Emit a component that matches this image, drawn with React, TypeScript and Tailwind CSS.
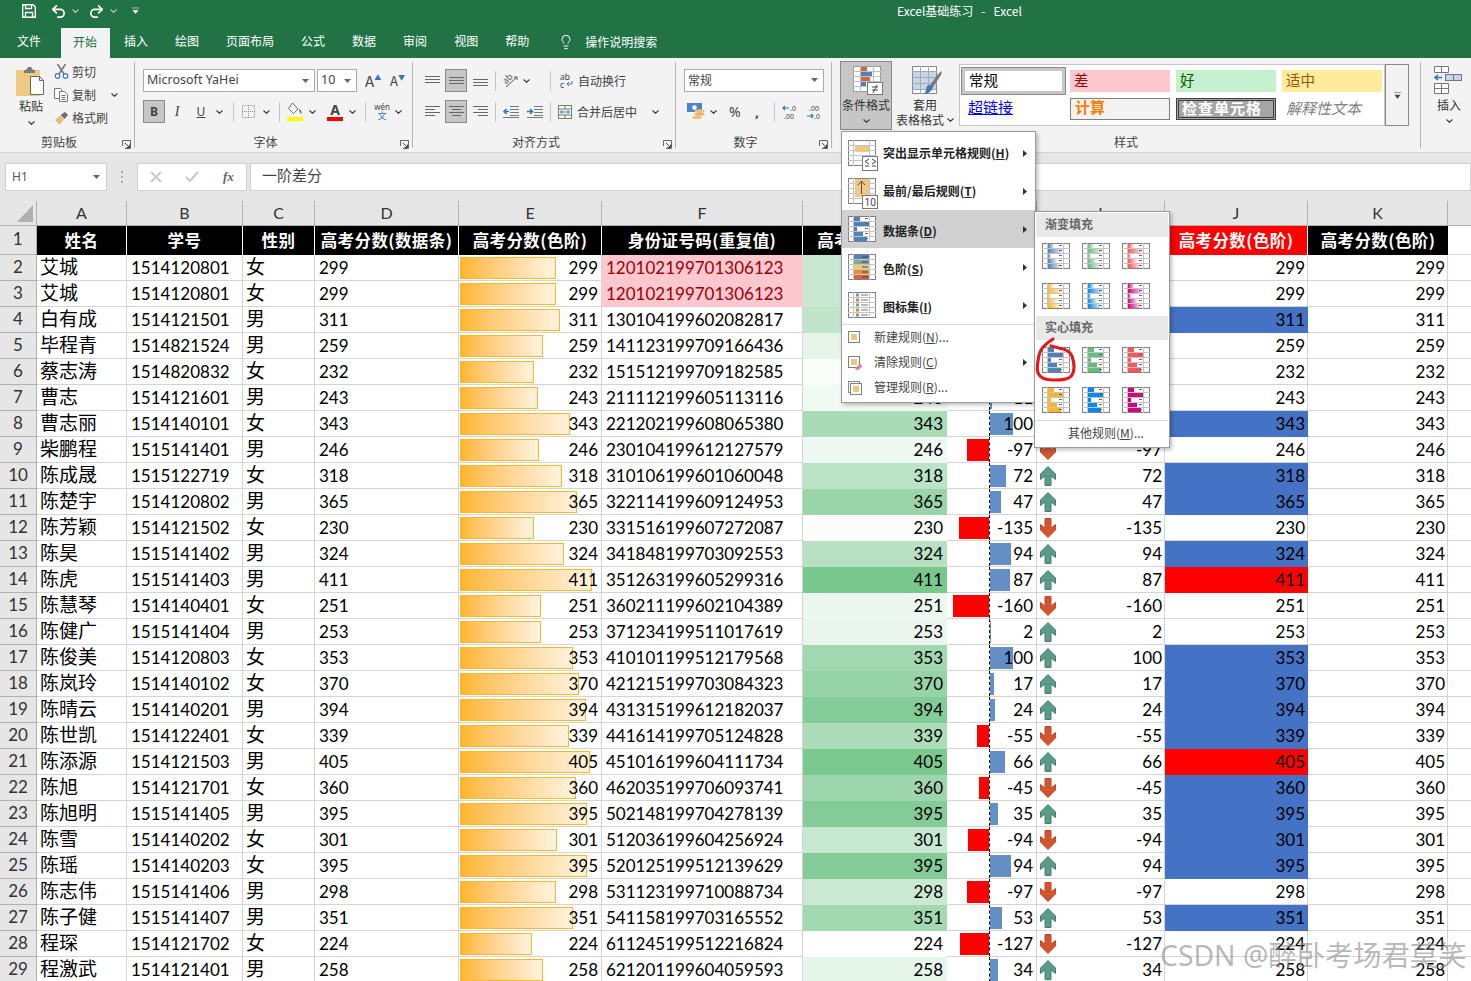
import React from "react"
import { Lightbulb, Redo2, Undo2 } from "lucide-react"

const rows: [string, string, string, number, string][] = [
  ["艾城", "1514120801", "女", 299, "120102199701306123"],
  ["艾城", "1514120801", "女", 299, "120102199701306123"],
  ["白有成", "1514121501", "男", 311, "130104199602082817"],
  ["毕程青", "1514821524", "男", 259, "141123199709166436"],
  ["蔡志涛", "1514820832", "女", 232, "151512199709182585"],
  ["曹志", "1514121601", "男", 243, "211112199605113116"],
  ["曹志丽", "1514140101", "女", 343, "221202199608065380"],
  ["柴鹏程", "1515141401", "男", 246, "230104199612127579"],
  ["陈成晟", "1515122719", "女", 318, "310106199601060048"],
  ["陈楚宇", "1514120802", "男", 365, "322114199609124953"],
  ["陈芳颖", "1514121502", "女", 230, "331516199607272087"],
  ["陈昊", "1515141402", "男", 324, "341848199703092553"],
  ["陈虎", "1515141403", "男", 411, "351263199605299316"],
  ["陈慧琴", "1514140401", "女", 251, "360211199602104389"],
  ["陈健广", "1515141404", "男", 253, "371234199511017619"],
  ["陈俊美", "1514120803", "女", 353, "410101199512179568"],
  ["陈岚玲", "1514140102", "女", 370, "421215199703084323"],
  ["陈晴云", "1514140201", "男", 394, "431315199612182037"],
  ["陈世凯", "1514122401", "女", 339, "441614199705124828"],
  ["陈添源", "1514121503", "男", 405, "451016199604111734"],
  ["陈旭", "1514121701", "女", 360, "462035199706093741"],
  ["陈旭明", "1515141405", "男", 395, "502148199704278139"],
  ["陈雪", "1514140202", "女", 301, "512036199604256924"],
  ["陈瑶", "1514140203", "女", 395, "520125199512139629"],
  ["陈志伟", "1515141406", "男", 298, "531123199710088734"],
  ["陈子健", "1515141407", "男", 351, "541158199703165552"],
  ["程琛", "1514121702", "女", 224, "611245199512216824"],
  ["程激武", "1514121401", "男", 258, "621201199604059593"],
]

const gridCols = "grid grid-cols-[37px_90px_116px_72px_144px_143px_201px_144px_90px_128px_143px_140px_23px]"
const cell = "border-r border-b border-[#d4d4d4] flex items-center overflow-visible whitespace-nowrap"
const numFont = "font-['Lato','Noto_Sans_CJK_SC',sans-serif] text-[17px]"

const greenScale = (v: number) => {
  const t = (v - 224) / 216
  return `rgb(${255 - 156 * t},${255 - 65 * t},${255 - 132 * t})`
}

const Chev = ({ className = "" }: { className?: string }) => (
  <svg width="7" height="4" viewBox="0 0 7 4" className={className}>
    <path d="M.5.5 3.5 3.3 6.5.5" fill="none" stroke="#444" strokeWidth="1.2" />
  </svg>
)

const Caret = () => (
  <svg width="7" height="4" viewBox="0 0 7 4"><path d="M0 0h7L3.5 4z" fill="#666" /></svg>
)

const Sep = () => <div className="w-px h-[20px] bg-[#c6c6c6]" />
const GroupSep = () => <div className="w-px h-[86px] mt-[2px] bg-[#b4b4b4]" />

const Launcher = () => (
  <svg width="9" height="9" viewBox="0 0 9 9" className="absolute right-[3px] top-[6px]">
    <path d="M.5 6V.5H8.5V8.5H3" fill="none" stroke="#666" />
    <path d="M3 3 7.5 7.5M7.5 4.5v3h-3" fill="none" stroke="#444" />
  </svg>
)

const Group = ({ className, label, launcher = true, children }: { className: string; label: string; launcher?: boolean; children: React.ReactNode }) => (
  <div className={`flex flex-col h-[90px] ${className}`}>
    <div className="h-[74px]">{children}</div>
    <div className={`relative h-[16px] text-center text-[12px] leading-[16px] text-[#444] ${launcher ? "pr-[16px]" : ""}`}>
      {label}
      {launcher && <Launcher />}
    </div>
  </div>
)

const Lines = ({ kind }: { kind: "top" | "mid" | "bot" | "left" | "center" | "right" }) => {
  const horizontal = kind === "top" || kind === "mid" || kind === "bot"
  const ys = kind === "top" ? [2, 5, 8] : kind === "mid" ? [3, 6, 9] : kind === "bot" ? [5, 8, 11] : [1, 4, 7, 10]
  return (
    <svg width="15" height="13" viewBox="0 0 15 13">
      {ys.map((y, i) => {
        const short = !horizontal && i % 2 === 1
        const x1 = kind === "right" && short ? 5 : kind === "center" && short ? 3 : 0
        const x2 = kind === "left" && short ? 10 : kind === "center" && short ? 12 : 15
        return <line key={y} x1={x1} x2={x2} y1={y + 0.5} y2={y + 0.5} stroke="#666" />
      })}
    </svg>
  )
}

const Selected = ({ children }: { children: React.ReactNode }) => (
  <div className="w-[22px] h-[23px] bg-[#c6c6c6] border border-[#8a8a8a] flex items-center justify-center">{children}</div>
)

const PasteIcon = () => (
  <svg width="30" height="31" viewBox="0 0 30 31">
    <rect x="0" y="4" width="24" height="26" rx="1" fill="#efc884" />
    <path d="M8 4h2l2-3h3l2 3h2v3H8z" fill="#7b7b7b" />
    <path d="M14.500 10.500h9l4 4v14h-13z" fill="#fff" stroke="#666" />
    <path d="M23.500 10.500v4h4" fill="none" stroke="#666" />
  </svg>
)

const ScissorsIcon = () => (
  <svg width="15" height="15" viewBox="0 0 15 15">
    <path d="M3.500 0 10 10M11.500 0 5 10" stroke="#7a7a7a" strokeWidth="1.600" fill="none" />
    <circle cx="3.500" cy="12" r="2.300" fill="none" stroke="#3f78b5" strokeWidth="1.200" />
    <circle cx="11.500" cy="12" r="2.300" fill="none" stroke="#3f78b5" strokeWidth="1.200" />
  </svg>
)

const CopyIcon = () => (
  <svg width="15" height="14" viewBox="0 0 15 14">
    <path d="M.5.500h6l1 1v9H.5z" fill="#fff" stroke="#777" />
    <path d="M5.500 3.500h5l3 3v7h-8z" fill="#fff" stroke="#777" />
    <path d="M7.500 7.500h4M7.500 9.500h4M7.500 11.500h4" stroke="#3f78b5" />
  </svg>
)

const BrushIcon = () => (
  <svg width="15" height="14" viewBox="0 0 15 14">
    <path d="M1 9 6 4.500 10 8.500 5.500 13.500C4 12 2 10.500 1 9z" fill="#e8bd7c" />
    <path d="M6.500 4 10.500 8 14 4 11 1z" fill="#6c6c6c" />
  </svg>
)

const BorderIcon = () => (
  <svg width="13" height="13" viewBox="0 0 13 13">
    <rect x=".5" y=".5" width="12" height="12" fill="none" stroke="#888" strokeDasharray="1 1" />
    <path d="M6.500 0v13M0 6.500h13" stroke="#888" strokeDasharray="1 1" />
  </svg>
)

const FillIcon = () => (
  <svg width="16" height="19" viewBox="0 0 16 19">
    <path d="M5.500 1 11 7 6.500 11.500 1.500 6.500z" fill="#fff" stroke="#666" />
    <path d="M12 7c2 1 3 3 2.500 4.500-1.500 0-2.500-2-2.500-4.500z" fill="#3f78b5" />
    <rect y="15" width="16" height="4" fill="#ffff00" />
  </svg>
)

const OrientIcon = () => (
  <svg width="16" height="16" viewBox="0 0 16 16">
    <text x="1" y="9" fontSize="9" fill="#555" transform="rotate(-45 5 8)" fontFamily="Noto Sans">ab</text>
    <path d="M3 14 14 4M14 4h-3M14 4v3" fill="none" stroke="#555" />
  </svg>
)

const WrapIcon = () => (
  <svg width="13" height="15" viewBox="0 0 13 15">
    <text x="0" y="7" fontSize="8.500" fill="#444" fontFamily="Noto Sans">ab</text>
    <text x="0" y="14.500" fontSize="8.500" fill="#444" fontFamily="Noto Sans">c</text>
    <path d="M12 8v3H7M7 11l2-2M7 11l2 2" fill="none" stroke="#3f78b5" />
  </svg>
)

const IndentIcon = ({ flip = false }: { flip?: boolean }) => (
  <svg width="16" height="12" viewBox="0 0 16 12">
    <path d="M7 .5h9M7 3.500h9M7 6.500h9M7 9.500h9M0 11.500h16" stroke="#777" fill="none" />
    {flip ? <path d="M0 5.500h5M3 3l2.500 2.500L3 8" stroke="#2f75c0" strokeWidth="1.500" fill="none" /> : <path d="M6 5.500H1M3.500 3 1 5.500 3.500 8" stroke="#2f75c0" strokeWidth="1.500" fill="none" />}
  </svg>
)

const MergeIcon = () => (
  <svg width="14" height="14" viewBox="0 0 14 14">
    <rect x=".5" y=".5" width="13" height="13" fill="#fff" stroke="#777" />
    <path d="M0 4h14M0 10h14M7 0v4M7 10v4" stroke="#777" />
    <path d="M2.500 7h9M4.500 5 2.500 7l2 2M9.500 5l2 2-2 2" fill="none" stroke="#2f75c0" />
  </svg>
)

const MoneyIcon = () => (
  <svg width="18" height="17" viewBox="0 0 18 17">
    <rect x="0" y="0" width="15" height="9" fill="#4a86c5" />
    <circle cx="7.500" cy="4.500" r="2.300" fill="#fff" />
    <ellipse cx="12.500" cy="8" rx="5" ry="1.800" fill="#f0c27a" />
    <ellipse cx="12.500" cy="11" rx="5" ry="1.800" fill="#eeb45f" />
    <ellipse cx="10" cy="14.500" rx="5" ry="1.800" fill="#f0c27a" />
  </svg>
)

const DecimalIcon = ({ more }: { more: boolean }) => (
  <svg width="16" height="14" viewBox="0 0 16 14">
    {more ? (
      <>
        <path d="M7 3H1M3 1 1 3l2 2" stroke="#2f75c0" strokeWidth="1.200" fill="none" />
        <text x="8" y="6" fontSize="7" fill="#444" fontFamily="Noto Sans">.0</text>
        <text x="2" y="13.500" fontSize="7" fill="#444" fontFamily="Noto Sans">.00</text>
      </>
    ) : (
      <>
        <text x="3" y="6" fontSize="7" fill="#444" fontFamily="Noto Sans">.00</text>
        <path d="M1 11h6M5 9l2 2-2 2" stroke="#2f75c0" strokeWidth="1.200" fill="none" />
        <text x="8" y="13.500" fontSize="7" fill="#444" fontFamily="Noto Sans">.0</text>
      </>
    )}
  </svg>
)

const CondFormatIcon = () => (
  <svg width="30" height="30" viewBox="0 0 30 30">
    <rect x=".5" y=".5" width="27" height="25" fill="#fff" stroke="#9a9a9a" />
    <path d="M0 5.500h28M0 10.500h28M0 15.500h28M0 20.500h28M7.500 0v26M20.500 0v26" stroke="#c0c0c0" />
    <rect x="8" y="1" width="6" height="4" fill="#dc6140" />
    <rect x="8" y="6" width="11" height="4" fill="#4f81bd" />
    <rect x="8" y="11" width="9" height="4" fill="#dc6140" />
    <rect x="8" y="16" width="5" height="4" fill="#4f81bd" />
    <rect x="14.500" y="16.500" width="15" height="12" fill="#fff" stroke="#777" />
    <path d="M19 21h6M19 24h6M24 19l-4 8" stroke="#444" fill="none" />
  </svg>
)

const TableStyleIcon = () => (
  <svg width="30" height="30" viewBox="0 0 30 30">
    <rect x=".5" y=".5" width="24" height="27" fill="#fff" stroke="#8a8a8a" />
    <rect x="1" y="6" width="23" height="17" fill="#c5d6ea" />
    <path d="M0 5.500h25M0 11.500h25M0 17.500h25M0 23.500h25M8.500 0v28M16.500 0v28" stroke="#a8a8a8" />
    <path d="M18 19 27 7l3-2-1 4-8 12z" fill="#7a7a7a" />
    <path d="M15 20c3-2 5-1 6 1-1 4-5 7-9 7 2-2 2-5 3-8z" fill="#3f78b5" />
  </svg>
)

const InsertIcon = () => (
  <svg width="28" height="28" viewBox="0 0 28 28">
    <path d="M.5.500h14v6H.5zM7.500.500v6M.5 17.500h14v10H.5zM7.500 17.500v10M.5 22.500h14" fill="#fff" stroke="#777" />
    <rect x="11.500" y="8.500" width="16" height="6" fill="#c5d6ea" stroke="#777" />
    <path d="M19.500 8.500v6" stroke="#777" />
    <path d="M8 11.500H1M4 9 1 11.500 4 14" fill="none" stroke="#2f75c0" strokeWidth="1.600" />
  </svg>
)

const GridFrame = () => (
  <>
    <rect x=".5" y=".5" width="27" height="25" fill="#fff" stroke="#808080" />
    {[5.5, 10.5, 15.5, 20.5].map((y) => <line key={y} x1="0" x2="28" y1={y} y2={y} stroke="#c4c4c4" />)}
    <line x1="5.500" x2="5.500" y1="0" y2="26" stroke="#c4c4c4" />
    <line x1="21.500" x2="21.500" y1="0" y2="26" stroke="#c4c4c4" />
  </>
)

const DataBarIcon = ({ color, gradient = false }: { color: string; gradient?: boolean }) => {
  const id = `bar-${color.slice(1)}`
  const bars = [6, 15, 3, 9, 13]
  return (
    <svg width="28" height="26" viewBox="0 0 28 26">
      <defs>
        <linearGradient id={id}>
          <stop offset="0" stopColor={color} />
          <stop offset="1" stopColor={color} stopOpacity=".1" />
        </linearGradient>
      </defs>
      <GridFrame />
      {bars.map((w, i) => <rect key={i} x="6" y={1 + i * 5} width={w} height="4" fill={gradient ? `url(#${id})` : color} />)}
      {bars.map((_, i) => <line key={i} x1="17" x2="20" y1={2.5 + i * 5} y2={2.5 + i * 5} stroke="#666" />)}
    </svg>
  )
}

const HighlightIcon = () => (
  <svg width="30" height="32" viewBox="0 0 30 32">
    <GridFrame />
    <rect x="7" y="6" width="14" height="6" fill="#efc884" />
    <rect x="14.500" y="16.500" width="15" height="14" fill="#fff" stroke="#777" />
    <path d="M21 19l-4 2.500 4 2.500M17 26h4M24 19l4 2.500-4 2.500M24 26h4" fill="none" stroke="#444" />
  </svg>
)

const TopBottomIcon = () => (
  <svg width="30" height="32" viewBox="0 0 30 32">
    <GridFrame />
    <rect x="7" y="1" width="14" height="18" fill="#efc884" />
    <path d="M13.500 16V3M10 7l3.500-4L17 7" fill="none" stroke="#555" />
    <rect x="14.500" y="17.500" width="15" height="13" fill="#fff" stroke="#777" />
    <text x="16.500" y="28" fontSize="10" fill="#444" fontFamily="Noto Sans">10</text>
  </svg>
)

const ColorScaleIcon = () => (
  <svg width="28" height="26" viewBox="0 0 28 26">
    <GridFrame />
    {["#4f81bd", "#7fa98f", "#efc884", "#e88f3c", "#dc6140"].map((c, i) => (
      <g key={c}>
        <rect x="6" y={1 + i * 5} width="15" height="4" fill={c} />
        <line x1="14" x2="20" y1={3 + i * 5} y2={3 + i * 5} stroke="#444" />
      </g>
    ))}
  </svg>
)

const IconSetIcon = () => (
  <svg width="28" height="26" viewBox="0 0 28 26">
    <GridFrame />
    {["#6aa88d", "#e07a3a", "#6aa88d", "#e07a3a", "#6aa88d"].map((c, i) => (
      <g key={i}>
        <rect x="8" y={1.500 + i * 5} width="3" height="3" fill={c} />
        <line x1="13" x2="20" y1={3 + i * 5} y2={3 + i * 5} stroke="#777" />
      </g>
    ))}
  </svg>
)

const SmallRuleIcon = ({ kind }: { kind: "new" | "clear" | "manage" }) => (
  <svg width="14" height="14" viewBox="0 0 14 14">
    {kind === "manage" && <rect x=".5" y=".5" width="11" height="11" fill="none" stroke="#888" />}
    <rect x={kind === "manage" ? 2.500 : 0.500} y={kind === "manage" ? 2.500 : 0.500} width="11" height="11" fill="#fff" stroke="#808080" />
    <rect x={kind === "manage" ? 5 : 3} y={kind === "manage" ? 5 : 3} width="6" height="6" fill="#efc884" />
    {kind === "clear" && <path d="M7 13 12 7.500 14.500 10 10 14.500z" fill="#ec7f9a" />}
  </svg>
)

const MenuArrow = () => (
  <svg width="4" height="7" viewBox="0 0 4 7" className="ml-auto mr-[8px]"><path d="M0 0l4 3.500L0 7z" fill="#333" /></svg>
)

const ArrowUp = () => (
  <svg width="16" height="20" viewBox="0 0 16 20">
    <path d="M8 .5 15.500 8V13.500L11 10V19.500H5V10L.5 13.500V8Z" fill="#5b9b87" stroke="#437f6c" />
  </svg>
)

const ArrowDown = () => (
  <svg width="16" height="20" viewBox="0 0 16 20">
    <path d="M8 19.500 15.500 12V6.500L11 10V.5H5V10L.5 6.500V12Z" fill="#d2552f" stroke="#bc4a2b" />
  </svg>
)

const Toolbar = () => (
  <div className="flex items-start h-[28px] bg-[#217346] pl-[22px] pt-[3px] text-white">
    <svg width="14" height="14" viewBox="0 0 14 14" className="mt-px">
      <path d="M.7.700H11L13.300 3V13.300H.7Z" fill="none" stroke="#fff" strokeWidth="1.400" />
      <path d="M3.500 1v3.500h6V1M3.500 13V8.500h7V13" fill="none" stroke="#fff" strokeWidth="1.300" />
    </svg>
    <Undo2 size={17} strokeWidth={2.4} className="ml-[14px]" />
    <Chev className="ml-[5px] mt-[6px] invert" />
    <Redo2 size={17} strokeWidth={2.4} className="ml-[9px]" />
    <Chev className="ml-[5px] mt-[6px] invert" />
    <svg width="7" height="7" viewBox="0 0 7 7" className="ml-[15px] mt-[4px]"><path d="M0 1h7M1 3.500h5L3.500 6.500z" fill="#fff" stroke="#fff" strokeWidth=".6" /></svg>
    <span className="ml-[758px] text-[12px] leading-[16px] whitespace-pre">Excel基础练习   -   Excel</span>
  </div>
)

const Tabs = () => (
  <div className="flex h-[30px] bg-[#217346] text-[12px] text-white leading-[26px] gap-[3px] pl-[5px]">
    <span className="px-3 mr-[5px]">文件</span>
    <span className="pl-3 pr-[13px] bg-[#f3f3f3] text-[#217346] leading-[27px]">开始</span>
    <span className="px-3 -ml-px">插入</span>
    <span className="px-3">绘图</span>
    <span className="px-3">页面布局</span>
    <span className="px-3">公式</span>
    <span className="px-3">数据</span>
    <span className="px-3">审阅</span>
    <span className="px-3">视图</span>
    <span className="px-3">帮助</span>
    <div className="flex items-center pl-[14px] pb-[2px]">
      <Lightbulb size={16} strokeWidth={1.500} />
      <span className="ml-[11px]">操作说明搜索</span>
    </div>
  </div>
)

const Ribbon = () => (
  <div className="flex items-start h-[95px] pt-[2px] bg-[#f3f3f3] border-b border-[#d4d4d4] text-[#444] text-[12px]">
    <Group className="w-[134px]" label="剪贴板">
      <div className="flex pl-[16px]">
        <div className="flex flex-col items-center w-[30px] pt-[6px]">
          <PasteIcon />
          <span className="leading-[16px] mt-[1px] text-[#333]">粘贴</span>
          <Chev className="mt-[7px]" />
        </div>
        <div className="flex flex-col ml-[8px]">
          <div className="flex items-center h-[23px]"><ScissorsIcon /><span className="ml-[3px]">剪切</span></div>
          <div className="flex items-center h-[23px]"><CopyIcon /><span className="ml-[3px]">复制</span><Chev className="ml-[15px]" /></div>
          <div className="flex items-center h-[23px]"><BrushIcon /><span className="ml-[3px]">格式刷</span></div>
        </div>
      </div>
    </Group>
    <GroupSep />
    <Group className="w-[277px]" label="字体">
      <div className="flex flex-col pl-[8px] pt-[9px]">
        <div className="flex items-center h-[23px]">
          <div className="flex items-center justify-between w-[172px] h-[23px] bg-white border border-[#ababab] pl-[3px] pr-[5px] font-['Noto_Sans'] text-[12.500px]">
            Microsoft YaHei <Caret />
          </div>
          <div className="flex items-center justify-between w-[40px] h-[23px] ml-[2px] bg-white border border-[#ababab] pl-[3px] pr-[5px] font-['Noto_Sans'] text-[12.500px]">
            10 <Caret />
          </div>
          <div className="ml-[8px] flex items-start w-[16px] text-[15px] leading-[16px]">A<span className="text-[7px] text-[#2f75c0] leading-[8px]">▲</span></div>
          <div className="ml-[9px] flex items-start w-[14px] text-[13px] leading-[16px]">A<span className="text-[7px] text-[#2f75c0] leading-[8px]">▼</span></div>
        </div>
        <div className="flex items-center h-[23px] mt-[8px]">
          <Selected><span className="font-['Noto_Sans'] font-bold text-[12px]">B</span></Selected>
          <span className="ml-[5px] w-[14px] text-center font-['Liberation_Serif'] italic text-[14px]">I</span>
          <span className="ml-[10px] w-[14px] text-center underline font-['Noto_Sans'] text-[12px]">U</span>
          <Chev className="ml-[8px]" />
          <div className="ml-[10px]"><Sep /></div>
          <div className="ml-[8px]"><BorderIcon /></div>
          <Chev className="ml-[8px]" />
          <div className="ml-[9px]"><Sep /></div>
          <div className="ml-[7px]"><FillIcon /></div>
          <Chev className="ml-[6px]" />
          <div className="ml-[11px] flex flex-col items-center w-[16px] leading-none">
            <span className="text-[14px] font-['Noto_Sans'] font-bold leading-[14px]">A</span>
            <div className="w-[16px] h-[4px] bg-[#ff0000]" />
          </div>
          <Chev className="ml-[6px]" />
          <div className="ml-[9px]"><Sep /></div>
          <div className="ml-[8px] flex flex-col items-center w-[16px]">
            <span className="text-[8px] leading-[8px] font-['Noto_Sans']">wén</span>
            <span className="text-[9px] leading-[10px] text-[#2f75c0]">文</span>
          </div>
          <Chev className="ml-[5px]" />
        </div>
      </div>
    </Group>
    <GroupSep />
    <Group className="w-[262px]" label="对齐方式">
      <div className="flex flex-col pl-[12px] pt-[9px]">
        <div className="flex items-center h-[23px]">
          <Lines kind="top" />
          <div className="ml-[5px]"><Selected><Lines kind="mid" /></Selected></div>
          <div className="ml-[6px]"><Lines kind="bot" /></div>
          <div className="ml-[7px]"><Sep /></div>
          <div className="ml-[7px]"><OrientIcon /></div>
          <Chev className="ml-[4px]" />
          <div className="ml-[20px]"><Sep /></div>
          <div className="ml-[9px]"><WrapIcon /></div>
          <span className="ml-[5px]">自动换行</span>
        </div>
        <div className="flex items-center h-[23px] mt-[8px]">
          <Lines kind="left" />
          <div className="ml-[5px]"><Selected><Lines kind="center" /></Selected></div>
          <div className="ml-[6px]"><Lines kind="right" /></div>
          <div className="ml-[7px]"><Sep /></div>
          <div className="ml-[7px]"><IndentIcon /></div>
          <div className="ml-[8px]"><IndentIcon flip /></div>
          <div className="ml-[7px]"><Sep /></div>
          <div className="ml-[7px]"><MergeIcon /></div>
          <span className="ml-[5px]">合并后居中</span>
          <Chev className="ml-[15px]" />
        </div>
      </div>
    </Group>
    <GroupSep />
    <Group className="w-[155px]" label="数字">
      <div className="flex flex-col pl-[8px] pt-[9px]">
        <div className="flex items-center justify-between w-[140px] h-[23px] bg-white border border-[#ababab] pl-[3px] pr-[5px] pb-[2px]">
          常规 <Caret />
        </div>
        <div className="flex items-center h-[23px] mt-[8px]">
          <div className="ml-[3px]"><MoneyIcon /></div>
          <Chev className="ml-[5px]" />
          <span className="ml-[12px] w-[13px] text-[14px] font-['Noto_Sans']">%</span>
          <span className="ml-[13px] w-[6px] text-[14px] font-bold font-['Noto_Sans']">,</span>
          <div className="ml-[13px]"><Sep /></div>
          <div className="ml-[7px]"><DecimalIcon more /></div>
          <div className="ml-[8px]"><DecimalIcon more={false} /></div>
        </div>
      </div>
    </Group>
    <GroupSep />
    <Group className="w-[588px]" label="样式" launcher={false}>
      <div className="flex pl-[8px]">
        <div className="flex flex-col items-center w-[52px] h-[69px] mt-px bg-[#c6c6c6] border border-[#8a8a8a] pt-[4px]">
          <div className="pl-[3px]"><CondFormatIcon /></div>
          <span className="mt-[1px] leading-[16px] text-[#333]">条件格式</span>
          <Chev className="mt-[6px]" />
        </div>
        <div className="flex flex-col items-center w-[60px] ml-[3px] mt-px pt-[5px]">
          <div className="pl-[4px]"><TableStyleIcon /></div>
          <span className="mt-[1px] leading-[15px] text-[#333]">套用</span>
          <div className="flex items-center leading-[15px] text-[#333] whitespace-nowrap">表格格式<Chev className="ml-[3px]" /></div>
        </div>
        <div className="flex w-[450px] h-[62px] ml-[4px] mt-[4px]">
          <div className="flex flex-col w-[427px] h-[62px] bg-white border border-[#c6c6c6] pl-px pt-[2px]">
            <div className="flex items-center h-[28px]">
              <div className="w-[105px] h-[28px] border border-[#8a8a8a] flex">
                <div className="flex-1 border-[3px] border-[#c6c6c6] flex items-center pl-[4px] pb-[3px] text-[14.500px] text-black">常规</div>
              </div>
              <div className="w-[100px] h-[22px] ml-[4px] bg-[#ffc7ce] text-[#9c0006] text-[14.500px] leading-[19px] pl-[4px]">差</div>
              <div className="w-[100px] h-[22px] ml-[6px] bg-[#c6efce] text-[#006100] text-[14.500px] leading-[19px] pl-[4px]">好</div>
              <div className="w-[100px] h-[22px] ml-[6px] bg-[#ffeb9c] text-[#9c5700] text-[14.500px] leading-[19px] pl-[4px]">适中</div>
            </div>
            <div className="flex items-start h-[22px] mt-[3px]">
              <div className="w-[105px] pl-[7px] text-[15px] leading-[18px] text-[#0000ff] underline">超链接</div>
              <div className="w-[100px] h-[22px] ml-[4px] bg-[#f2f2f2] border border-[#7f7f7f] text-[#fa7d00] font-bold text-[15px] leading-[16px] pl-[4px]">计算</div>
              <div className="w-[100px] h-[22px] ml-[6px] bg-[#a5a5a5] border-[3px] border-double border-[#3f3f3f] text-white font-bold text-[15px] tracking-[1px] leading-[13px] pl-[3px] whitespace-nowrap">检查单元格</div>
              <div className="w-[100px] h-[22px] ml-[6px] italic text-[#7f7f7f] text-[15px] leading-[20px] pl-[4px]">解释性文本</div>
            </div>
          </div>
          <div className="flex flex-col items-center justify-center w-[24px] h-[62px] border border-[#8a8a8a] bg-[#f3f3f3]">
            <svg width="7" height="7" viewBox="0 0 7 7"><path d="M0 .5h7M1 3h5L3.500 6.500z" fill="#444" stroke="#444" strokeWidth=".5" /></svg>
          </div>
        </div>
      </div>
    </Group>
    <GroupSep />
    <div className="flex flex-col items-center w-[50px] pt-[6px] text-[#333]">
      <div className="pl-[3px]"><InsertIcon /></div>
      <span className="mt-[3px] pl-[6px] leading-[16px]">插入</span>
      <Chev className="mt-[6px] ml-[6px]" />
    </div>
  </div>
)

const FormulaBar = () => (
  <div className="flex items-start h-[48px] pt-[10px] bg-[#e6e6e6]">
    <div className="flex items-center justify-between w-[102px] h-[28px] ml-[5px] bg-white border border-[#d0d0d0] pl-[6px] pr-[6px] font-['Noto_Sans'] text-[12px] text-[#555]">
      H1 <Caret />
    </div>
    <div className="flex flex-col gap-[3px] w-[2px] h-[28px] ml-[14px] justify-center">
      <div className="w-[2px] h-[2px] bg-[#aaa]" />
      <div className="w-[2px] h-[2px] bg-[#aaa]" />
      <div className="w-[2px] h-[2px] bg-[#aaa]" />
    </div>
    <div className="flex items-center w-[110px] h-[28px] ml-[14px] bg-white border border-[#d0d0d0]">
      <svg width="12" height="12" viewBox="0 0 12 12" className="ml-[12px]"><path d="M1 1 11 11M11 1 1 11" stroke="#c8c8c8" strokeWidth="1.800" /></svg>
      <svg width="14" height="12" viewBox="0 0 14 12" className="ml-[23px]"><path d="M1 6 5 10 13 1" fill="none" stroke="#c8c8c8" strokeWidth="2" /></svg>
      <span className="ml-[24px] font-['Liberation_Serif'] italic font-bold text-[13px] text-[#666]">fx</span>
    </div>
    <div className="flex items-center flex-1 h-[28px] ml-[3px] bg-white border border-[#d0d0d0] pl-[11px] pb-[4px] text-[15px] text-[#444]">一阶差分</div>
  </div>
)

const colLetters = ["A", "B", "C", "D", "E", "F", "G", "H", "I", "J", "K"]

const SheetHeader = () => (
  <>
    <div className={`${gridCols} grid-rows-[25px] h-[25px] leading-[20px] bg-[#e6e6e6] font-['Lato','Noto_Sans',sans-serif] text-[16px] text-[#333]`}>
      <div className="relative border-r border-b border-[#b1b1b1]">
        <svg width="16" height="17" viewBox="0 0 16 17" className="absolute right-[3px] bottom-[3px]"><path d="M16 0V17H0Z" fill="#b1b1b1" /></svg>
      </div>
      {colLetters.map((c) => (
        <div key={c} className="flex items-center justify-center border-r border-b border-[#b1b1b1]">{c}</div>
      ))}
      <div className="border-b border-[#b1b1b1]" />
    </div>
    <div className={`${gridCols} grid-rows-[29px] h-[29px] leading-[22px] text-[16.500px] font-bold text-white tracking-[0.4px]`}>
      <div className="flex items-center justify-center pb-[2px] bg-[#e6e6e6] border-r border-b border-[#b1b1b1] font-['Lato'] font-normal text-[17px] text-[#333]">1</div>
      {["姓名", "学号", "性别", "高考分数(数据条)", "高考分数(色阶)", "身份证号码(重复值)", "高考分数(色阶)", "一阶差分", "一阶差分"].map((t, i) => (
        <div key={i} className="flex items-center justify-center pb-[2px] bg-black border-r border-white overflow-hidden whitespace-nowrap">{t}</div>
      ))}
      <div className="flex items-center justify-center pb-[2px] bg-[#ff0000] border-r border-white whitespace-nowrap">高考分数(色阶)</div>
      <div className="flex items-center justify-center pb-[2px] bg-black whitespace-nowrap">高考分数(色阶)</div>
      <div className="border-b border-[#d4d4d4]" />
    </div>
  </>
)

const SheetRow = ({ row, index }: { row: [string, string, string, number, string]; index: number }) => {
  const [name, id, gender, score, card] = row
  const diff = index > 0 ? score - rows[index - 1][3] : 0
  const barW = Math.abs(diff) * 0.225
  const duplicated = index < 2
  const jCell = score > 400 ? "bg-[#ff0000] border-transparent" : score >= 300 ? "bg-[#4472c4] border-transparent" : "border-[#d4d4d4]"
  return (
    <div className={`${gridCols} grid-rows-[26px] h-[26px] leading-[20px] text-black`}>
      <div className={`flex items-center justify-center pb-[2px] bg-[#e6e6e6] border-r border-b border-[#b1b1b1] ${numFont} text-[#333]`}>{index + 2}</div>
      <div className={`${cell} pl-[3px] pb-[4px] text-[19px]`}>{name}</div>
      <div className={`${cell} pl-[4px] ${numFont}`}>{id}</div>
      <div className={`${cell} pl-[3px] pb-[4px] text-[19px]`}>{gender}</div>
      <div className={`${cell} pl-[4px] ${numFont}`}>{score}</div>
      <div className={`${cell} relative justify-end pr-[3px] ${numFont}`}>
        <div
          className="absolute left-px top-[2px] h-[22px] border border-[#ffb628] bg-gradient-to-r from-[#ffb628] to-[#fff3de]"
          style={{ width: score * 0.321 }}
        />
        <span className="relative">{score}</span>
      </div>
      <div className={`${cell} pl-[4px] ${numFont} ${duplicated ? "bg-[#ffc7ce] text-[#9c0006] border-transparent" : ""}`}>{card}</div>
      <div className={`${cell} justify-end pr-[3px] ${numFont} border-transparent`} style={{ backgroundColor: greenScale(score) }}>{score}</div>
      <div className={`${cell} relative justify-end pr-[3px] ${numFont}`}>
        {diff !== 0 && (
          <div
            className={`absolute top-[2px] h-[22px] ${diff > 0 ? "bg-[#638ec6]" : "bg-[#ff0000]"}`}
            style={diff > 0 ? { left: 43, width: barW } : { left: 42 - barW, width: barW }}
          />
        )}
        <div className="absolute left-[42px] top-0 h-full border-l border-dashed border-black" />
        <span className="relative">{diff}</span>
      </div>
      <div className={`${cell} relative justify-end pr-[2px] ${numFont}`}>
        <div className="absolute left-[3px] top-[3px]">{diff >= 0 ? <ArrowUp /> : <ArrowDown />}</div>
        <span>{diff}</span>
      </div>
      <div className={`border-r border-b flex items-center justify-end pr-[2px] ${numFont} ${jCell}`}>{score}</div>
      <div className={`${cell} justify-end pr-[2px] ${numFont}`}>{score}</div>
      <div className="border-b border-[#d4d4d4]" />
    </div>
  )
}

const MenuRow = ({ icon, label, accel, active = false, low = false }: { icon: React.ReactNode; label: string; accel: string; active?: boolean; low?: boolean }) => (
  <div className={`flex items-center h-[38px] pl-[6px] ${active ? "bg-[#d0d0d0]" : ""}`}>
    <div className="w-[28px] h-[26px]">{icon}</div>
    <span className={`ml-[7px] text-[12px] font-semibold text-[#222] whitespace-nowrap ${low ? "mt-[4px]" : ""}`}>{label}(<u>{accel}</u>)</span>
    <MenuArrow />
  </div>
)

const SmallRow = ({ kind, label, accel, arrow = false }: { kind: "new" | "clear" | "manage"; label: string; accel: string; arrow?: boolean }) => (
  <div className="flex items-center h-[25px] pl-[6px]">
    <SmallRuleIcon kind={kind} />
    <span className="ml-[12px] mb-[2px] text-[12px] text-[#444] whitespace-nowrap">{label}(<u>{accel}</u>){arrow ? "" : "..."}</span>
    {arrow && <MenuArrow />}
  </div>
)

const SectionTitle = ({ children }: { children: React.ReactNode }) => (
  <div className="h-[24px] bg-[#e9e9e9] pl-[9px] text-[12px] leading-[22px] font-semibold text-[#666]">{children}</div>
)

const CondMenu = () => (
  <div className="absolute left-[841px] top-[131px] w-[195px] h-[272px] bg-white border border-[#9a9a9a] shadow-[2px_2px_4px_rgba(0,0,0,0.25)] pt-[2px]">
    <MenuRow icon={<HighlightIcon />} label="突出显示单元格规则" accel="H" />
    <MenuRow icon={<TopBottomIcon />} label="最前/最后规则" accel="T" />
    <MenuRow icon={<DataBarIcon color="#4f81bd" />} label="数据条" accel="D" active low />
    <MenuRow icon={<ColorScaleIcon />} label="色阶" accel="S" low />
    <MenuRow icon={<IconSetIcon />} label="图标集" accel="I" low />
    <div className="h-px bg-[#d8d8d8]" />
    <SmallRow kind="new" label="新建规则" accel="N" />
    <SmallRow kind="clear" label="清除规则" accel="C" arrow />
    <SmallRow kind="manage" label="管理规则" accel="R" />
  </div>
)

const barColors = ["#4f81bd", "#63be7b", "#ff555a", "#ffb628", "#008aef", "#d6007b"]

const BarSubmenu = () => (
  <div className="absolute left-[1034px] top-[211px] w-[136px] h-[237px] bg-white border border-[#9a9a9a] shadow-[2px_2px_4px_rgba(0,0,0,0.25)] p-px">
    <SectionTitle>渐变填充</SectionTitle>
    <div className="grid grid-cols-[28px_28px_28px] gap-x-[12px] gap-y-[14px] pl-[6px] pt-[6px]">
      {barColors.map((c) => <DataBarIcon key={c} color={c} gradient />)}
    </div>
    <div className="mt-[7px]"><SectionTitle>实心填充</SectionTitle></div>
    <div className="grid grid-cols-[28px_28px_28px] gap-x-[12px] gap-y-[14px] pl-[6px] pt-[7px]">
      {barColors.map((c) => <DataBarIcon key={c} color={c} />)}
    </div>
    <div className="h-px bg-[#d8d8d8] mt-[7px]" />
    <div className="text-center text-[12px] leading-[22px] text-[#444] pt-px pl-[8px]">其他规则(<u>M</u>)...</div>
  </div>
)

export default function App() {
  return (
    <div className="relative w-[1471px] h-[981px] overflow-hidden bg-white font-['Noto_Sans_CJK_SC','Noto_Sans',sans-serif]">
      <Toolbar />
      <Tabs />
      <Ribbon />
      <FormulaBar />
      <SheetHeader />
      {rows.map((r, i) => <SheetRow key={i} row={r} index={i} />)}
      <CondMenu />
      <BarSubmenu />
      <svg width="50" height="50" viewBox="0 0 50 50" className="absolute left-[1033px] top-[336px]">
        <path d="M20 3C12 8 7 13 6 19 5 26 3 32 5 37 7 42 13 44 20 44 28 44 36 44 39 39 42 34 41 26 39 20 37 15 32 13 26 12L18 10" fill="none" stroke="#e01b1f" strokeWidth="3.200" strokeLinecap="round" />
      </svg>
      <div className="absolute left-[1160px] top-[935px] text-[28.300px] leading-[40px] text-[#8a8a8a]/60 whitespace-nowrap font-['Noto_Sans','Noto_Sans_CJK_SC',sans-serif]">CSDN @醉卧考场君莫笑</div>
    </div>
  )
}
